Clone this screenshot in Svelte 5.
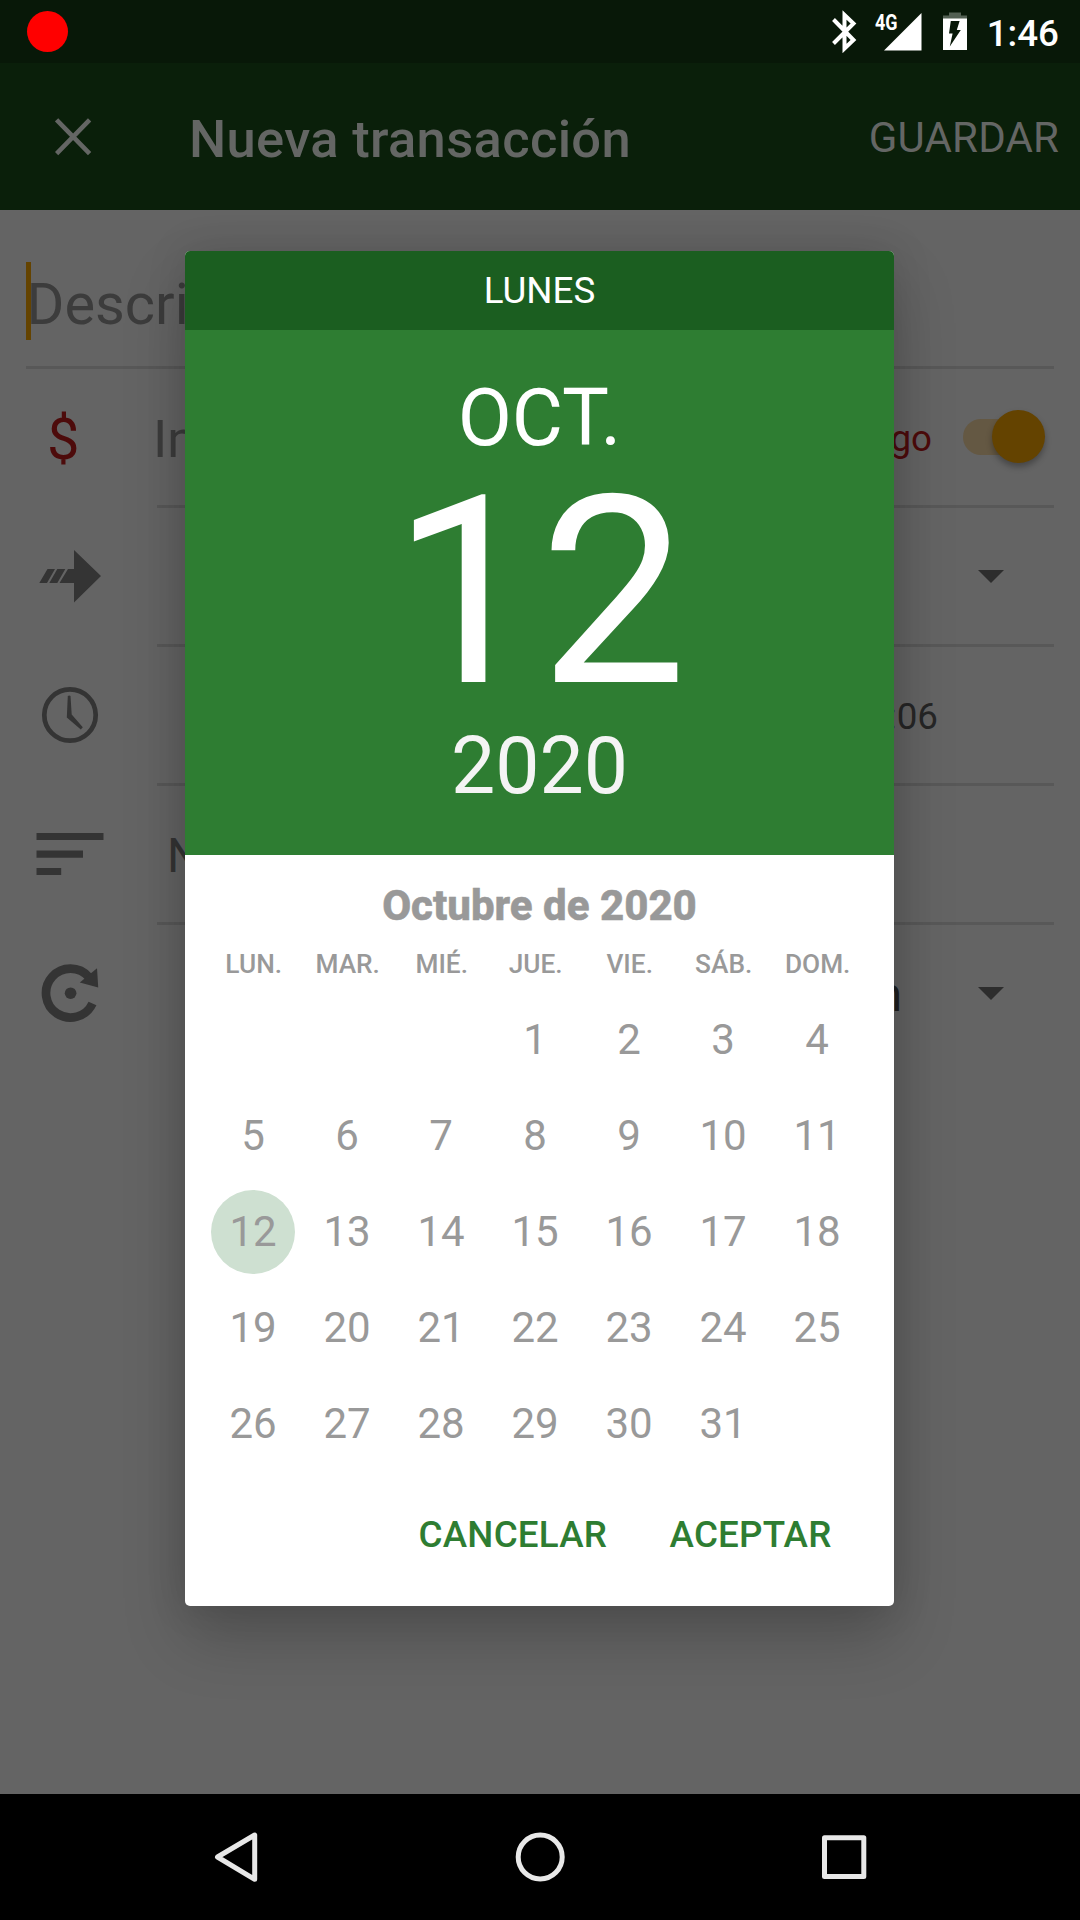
<script>
  const weekdays = ['LUN.', 'MAR.', 'MIÉ.', 'JUE.', 'VIE.', 'SÁB.', 'DOM.'];
  const leadingBlanks = 3;
  const cells = [
    ...Array(leadingBlanks).fill(null),
    ...Array.from({ length: 31 }, (_, i) => i + 1)
  ];
  const selected = 12;
</script>

<div class="screen">
  <div class="status">
    <span class="rec"></span>
    <svg class="status-icons" width="146" height="63" viewBox="828 0 146 63">
      <path d="M833.5 19.5 L853.5 40 L844.5 48.5 V15 L853.5 23.5 L833.5 43.5" fill="none" stroke="#fff" stroke-width="4" />
      <path d="M921.5 13V50.5H884Z" fill="#fff" />
      <text x="875" y="29.8" class="net" textLength="22.5" lengthAdjust="spacingAndGlyphs">4G</text>
      <path d="M949 12.5h12v3h6v3.5h-24v-3.5h6z" fill="#536053" />
      <path d="M943 18.5h24V50h-24z" fill="#fff" />
      <path d="M950.8 21H959.6L956.8 30H960.8L949.8 46.5L952.6 33.4H949Z" fill="#081808" />
    </svg>
    <span class="time">1:46</span>
  </div>

  <header class="appbar">
    <svg class="close" width="37" height="38" viewBox="0 0 37 38">
      <path d="M1.6 1.8 34.6 35.6M34.6 1.8 1.6 35.6" stroke="#646664" stroke-width="4.6" fill="none" />
    </svg>
    <h1>Nueva transacción</h1>
    <span class="save">GUARDAR</span>
  </header>

  <main class="form">
    <div class="description">
      <span class="caret"></span>
      <span class="hint">Descripción</span>
    </div>

    <div class="row">
      <div class="icon"><span class="currency">$</span></div>
      <div class="field">
        <span class="amount">Importe</span>
        <div class="end">
          <span class="kind">Cargo</span>
          <span class="switch"><span class="thumb"></span></span>
        </div>
      </div>
    </div>

    <div class="row">
      <div class="icon">
        <svg width="140" height="136" viewBox="0 508 140 136" fill="#343434">
          <path d="M74 550 101 576 74 602.500V583H59.500L68 569H74Z" />
          <path d="M47.500 569H55L47 583H39.300ZM57.300 569H65.300L57.300 583H49.300Z" />
        </svg>
      </div>
      <div class="field">
        <svg class="drop" width="26" height="13" viewBox="0 0 26 13"><path d="M0 0H26L13 13Z" fill="#2d2d2d" /></svg>
      </div>
    </div>

    <div class="row">
      <div class="icon">
        <svg width="140" height="136" viewBox="0 647 140 136">
          <circle cx="70" cy="715" r="25.700" fill="none" stroke="#343434" stroke-width="4.700" />
          <path d="M67.800 696Q69.300 695 70.500 696L71.700 714.500 82.800 727.300 80.800 729.500 66.800 717.500Z" fill="#343434" />
        </svg>
      </div>
      <div class="field"><span class="clock">13:46:06</span></div>
    </div>

    <div class="row">
      <div class="icon">
        <svg width="140" height="136" viewBox="0 786 140 136" fill="#343434">
          <path d="M36.500 833H103.500V840H36.500ZM36.500 850.500H83V857.700H36.500ZM36.500 868H61.200V875H36.500Z" />
        </svg>
      </div>
      <div class="field"><span class="notes">Notas</span></div>
    </div>

    <div class="row last">
      <div class="icon">
        <svg width="140" height="136" viewBox="0 925 140 136">
          <path d="M92.500 1003.500A24.400 24.400 0 1 1 89 977.300" fill="none" stroke="#343434" stroke-width="8.700" />
          <path d="M97 968.300 98.200 987.500 79.800 982.600Z" fill="#343434" />
          <circle cx="70.600" cy="993.200" r="5.800" fill="#343434" />
        </svg>
      </div>
      <div class="field">
        <span class="schedule">Programación</span>
        <svg class="drop" width="26" height="13" viewBox="0 0 26 13"><path d="M0 0H26L13 13Z" fill="#2d2d2d" /></svg>
      </div>
    </div>
  </main>

  <nav class="navbar">
    <svg width="1080" height="126" viewBox="0 1794 1080 126" fill="none" stroke="#e8e8e8" stroke-width="5" stroke-linejoin="round">
      <path d="M217.500 1857 254.700 1835V1879.300Z" />
      <circle cx="540.200" cy="1857" r="22" />
      <path d="M824.500 1837.800H863.800V1876.400H824.500Z" />
    </svg>
  </nav>

  <div class="dialog">
    <div class="weekday">LUNES</div>
    <div class="hero">
      <span class="month">OCT.</span>
      <span class="day">12</span>
      <span class="year">2020</span>
    </div>
    <div class="calendar">
      <div class="title">Octubre de 2020</div>
      <div class="names">
        {#each weekdays as name}<span>{name}</span>{/each}
      </div>
      <div class="days">
        {#each cells as d}
          <div class="cell"><span class="num" class:selected={d === selected}>{d ?? ''}</span></div>
        {/each}
      </div>
    </div>
    <div class="actions">
      <span>CANCELAR</span>
      <span>ACEPTAR</span>
    </div>
  </div>
</div>

<style>
  :global(body) {
    margin: 0;
    background: #646464;
  }
  .screen {
    position: relative;
    width: 1080px;
    height: 1920px;
    display: flex;
    flex-direction: column;
    overflow: hidden;
    background: #646464;
    font-family: Roboto, sans-serif;
    white-space: nowrap;
  }
  svg {
    display: block;
    flex: none;
  }
  .status {
    height: 63px;
    display: flex;
    align-items: center;
    background: #081808;
    box-sizing: border-box;
    padding: 0 21px 0 27px;
  }
  .rec {
    width: 41px;
    height: 41px;
    border-radius: 50%;
    background: #f00;
  }
  .status-icons {
    margin-left: auto;
  }
  .net {
    font-size: 22.5px;
    font-weight: 700;
    fill: #fff;
  }
  .time {
    margin-left: 13px;
    padding-top: 4px;
    font-size: 36.75px;
    line-height: 40px;
    font-weight: 500;
    color: #fff;
  }
  .appbar {
    height: 147px;
    display: flex;
    align-items: flex-start;
    background: #0a1f0a;
    color: #646664;
    box-sizing: border-box;
    padding: 0 21px 0 55px;
  }
  .close {
    margin-top: 55px;
  }
  h1 {
    margin: 46px 0 0 97px;
    font-size: 52.5px;
    line-height: 60px;
    font-weight: 500;
    letter-spacing: 0.33px;
  }
  .save {
    margin: 50px 0 0 auto;
    font-size: 42px;
    line-height: 50px;
    letter-spacing: 0.15px;
  }
  .form {
    height: 1584px;
  }
  .description {
    height: 156px;
    margin: 0 26px;
    display: flex;
    align-items: flex-start;
    border-bottom: 3px solid #585858;
  }
  .caret {
    z-index: 1;
    width: 5px;
    height: 78px;
    margin-top: 52px;
    background: #644300;
  }
  .hint {
    margin: 59px 0 0 -4.5px;
    font-size: 57.75px;
    line-height: 70px;
    color: #3c3c3c;
  }
  .row {
    display: grid;
    grid-template-columns: 157px 897px;
    height: 139px;
  }
  .icon {
    height: 136px;
  }
  .field {
    display: flex;
    align-items: flex-start;
    border-bottom: 3px solid #585858;
  }
  .last .field {
    border-color: transparent;
  }
  .currency {
    display: block;
    margin: 35px 0 0 47px;
    font-size: 57.75px;
    line-height: 70px;
    color: #4d0b0b;
  }
  .amount {
    margin: 40px 0 0 -4px;
    font-size: 52.5px;
    line-height: 60px;
    color: #3c3c3c;
  }
  .end {
    display: flex;
    margin-left: auto;
    padding-right: 14px;
  }
  .kind {
    margin: 48px 31px 0 0;
    font-size: 36.75px;
    line-height: 44px;
    color: #4d0b0b;
  }
  .switch {
    display: flex;
    width: 77px;
    height: 36px;
    margin-top: 50px;
    border-radius: 18px;
    background: #645843;
  }
  .thumb {
    width: 53px;
    height: 53px;
    margin: -9px 0 0 29px;
    flex: none;
    border-radius: 50%;
    background: #644300;
    box-shadow: 0 4px 6px rgba(0, 0, 0, 0.3);
  }
  .drop {
    margin: 62px 50px 0 auto;
  }
  .clock {
    margin: 48px 116px 0 auto;
    font-size: 36.75px;
    line-height: 44px;
    color: #262626;
  }
  .notes {
    margin: 41px 0 0 10px;
    font-size: 47.25px;
    line-height: 58px;
    color: #343434;
  }
  .schedule {
    margin: 41px 0 0 auto;
    font-size: 47.25px;
    line-height: 58px;
    color: #1f1f1f;
  }
  .schedule + .drop {
    margin-left: 76px;
  }
  .navbar {
    height: 126px;
    background: #000;
  }
  .dialog {
    position: absolute;
    left: 185px;
    top: 251px;
    width: 709px;
    height: 1355px;
    display: flex;
    flex-direction: column;
    overflow: hidden;
    border-radius: 5px;
    background: #fff;
    box-shadow: 0 32px 64px rgba(0, 0, 0, 0.2), 0 0 40px rgba(0, 0, 0, 0.12);
  }
  .weekday {
    height: 79px;
    line-height: 79px;
    background: #1b5e20;
    color: #fff;
    text-align: center;
    font-size: 36.75px;
  }
  .hero {
    height: 525px;
    box-sizing: border-box;
    padding-top: 42px;
    display: flex;
    flex-direction: column;
    align-items: center;
    background: #2e7d32;
    color: #fff;
  }
  .month,
  .year {
    font-size: 78.75px;
    line-height: 92px;
  }
  .year {
    color: #f4f4f4;
  }
  .day {
    font-size: 262.5px;
    line-height: 256px;
  }
  .calendar {
    padding: 26px 25.5px 0 21px;
    color: #999;
  }
  .title {
    padding-left: 4.5px;
    text-align: center;
    font-size: 42px;
    line-height: 50px;
    font-weight: 800;
    -webkit-text-stroke: 0.5px #999;
  }
  .names {
    display: grid;
    grid-template-columns: repeat(7, 94px);
    margin: 13px 0 0 0.7px;
    text-align: center;
    font-size: 26.25px;
    line-height: 40px;
    font-weight: 500;
  }
  .days {
    display: grid;
    grid-template-columns: repeat(7, 94px);
    grid-auto-rows: 96px;
    margin-top: 8px;
  }
  .cell {
    display: flex;
    align-items: center;
    justify-content: center;
  }
  .num {
    width: 84px;
    height: 84px;
    border-radius: 50%;
    text-align: center;
    font-size: 42px;
    line-height: 84px;
  }
  .selected {
    background: #cee0d1;
  }
  .actions {
    display: flex;
    justify-content: flex-end;
    gap: 62.5px;
    padding: 41px 62.5px 0 0;
    font-size: 36.75px;
    line-height: 44px;
    font-weight: 500;
    letter-spacing: 0.2px;
    color: #2e7d32;
  }
</style>
